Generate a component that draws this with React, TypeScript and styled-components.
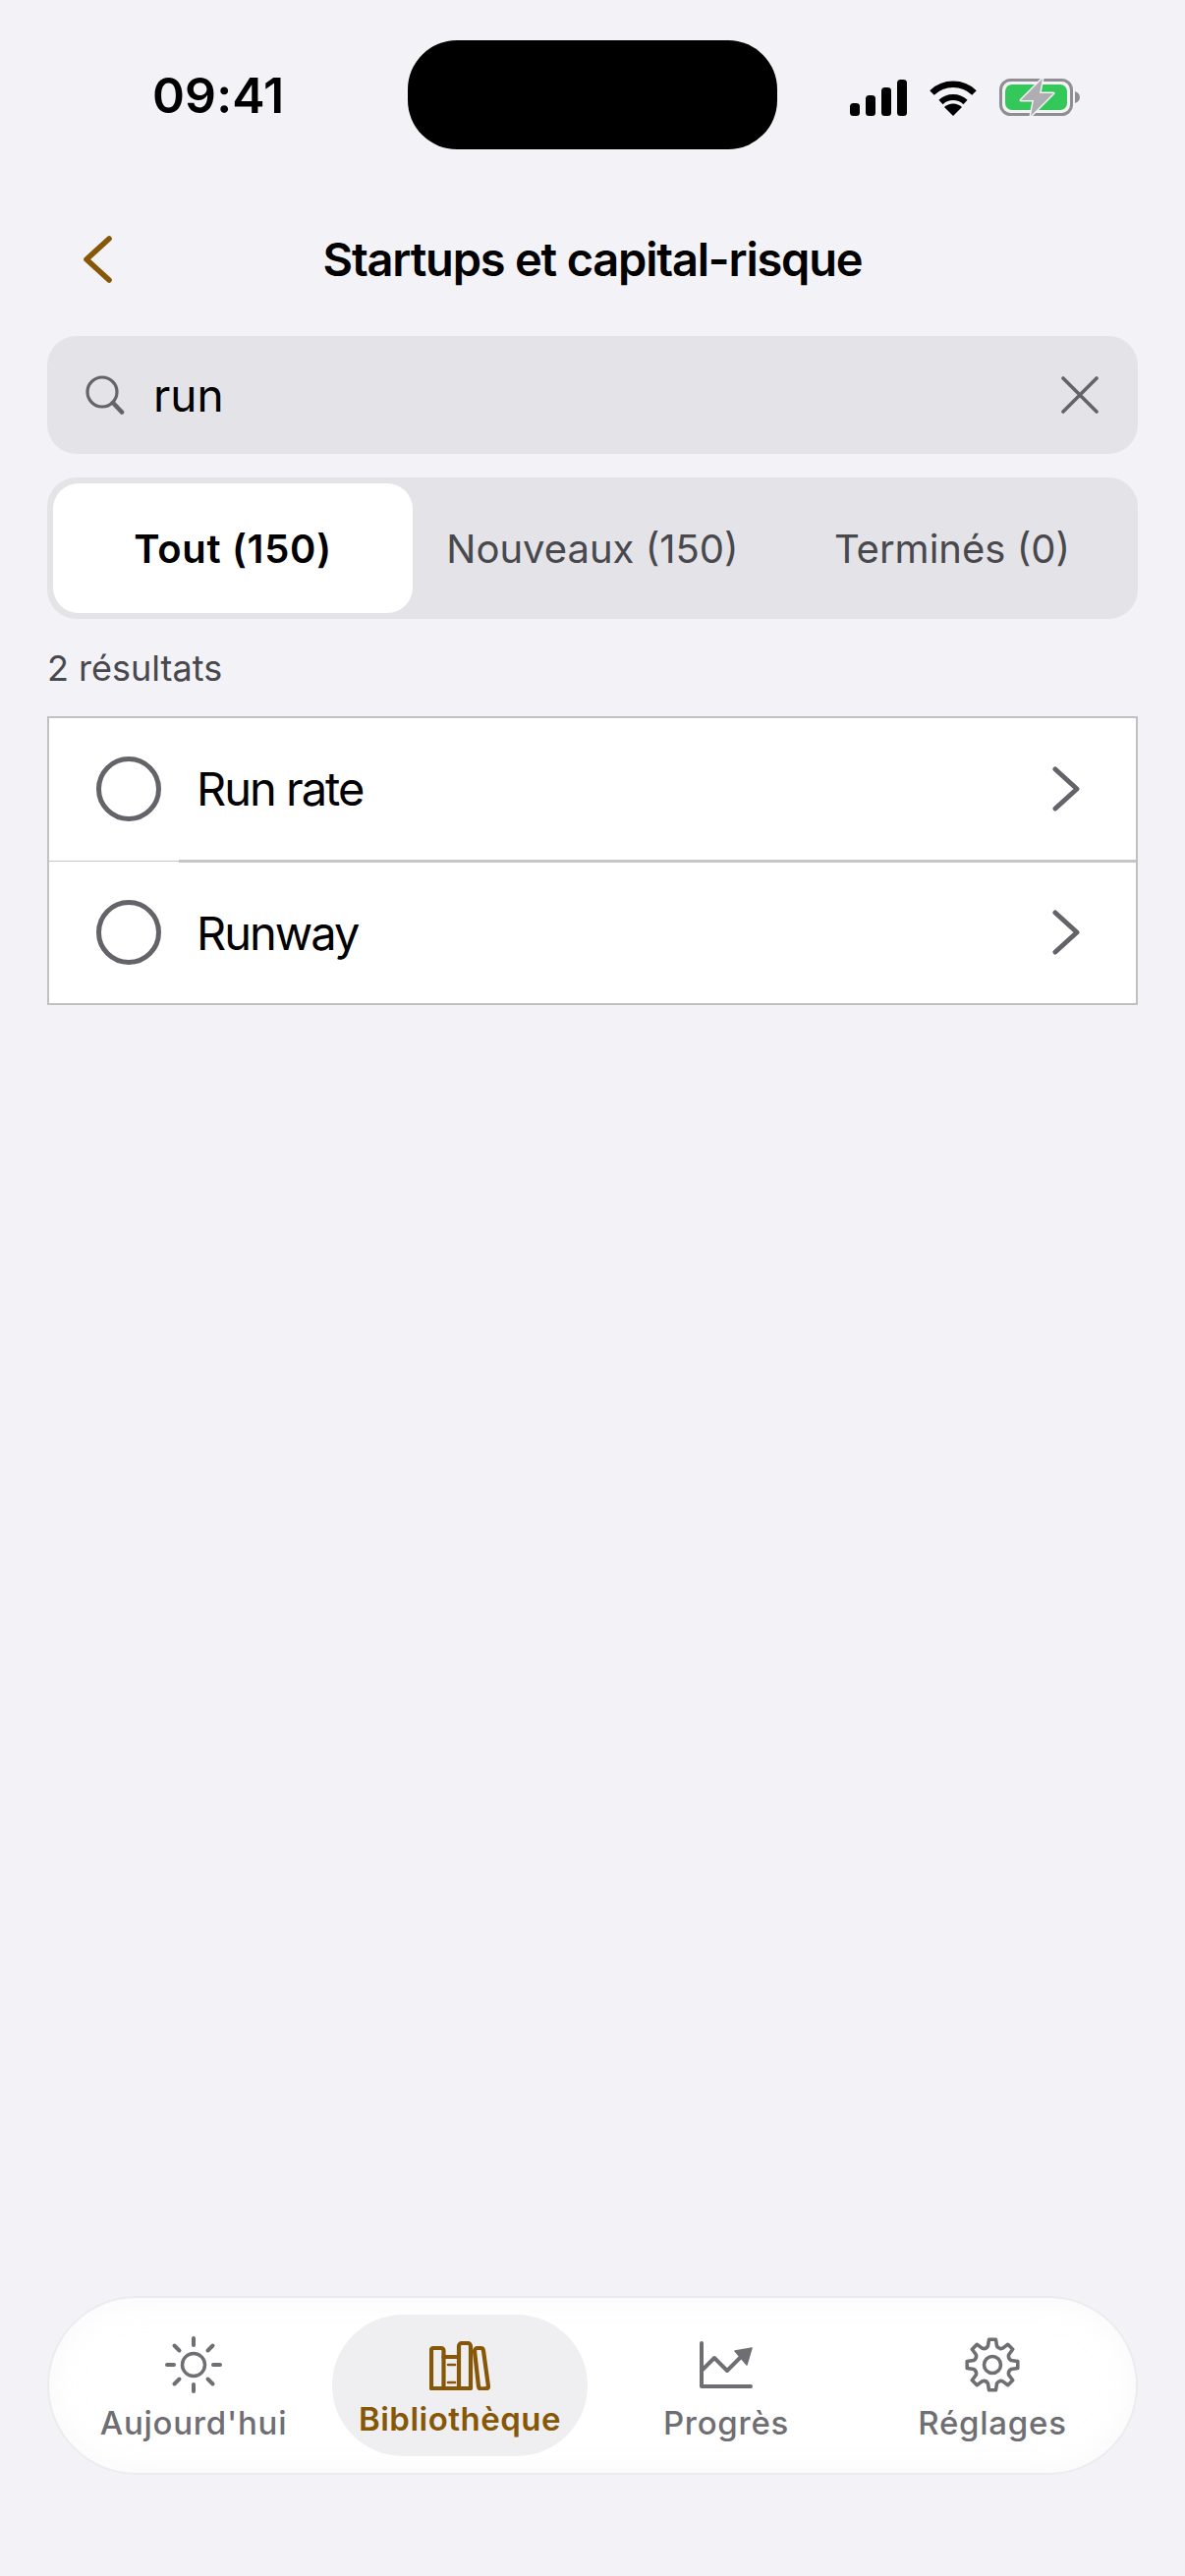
import React from 'react';
import styled, { createGlobalStyle } from 'styled-components';

const GlobalStyle = createGlobalStyle`
  html, body {
    margin: 0;
    padding: 0;
    background: #f2f2f7;
  }
  * {
    box-sizing: border-box;
  }
`;

const Page = styled.div`
  width: 1206px;
  height: 2622px;
  background: #f2f2f7;
  display: flex;
  flex-direction: column;
  font-family: Inter, "Liberation Sans", sans-serif;
  color: #000;
  overflow: hidden;
`;

const StatusBar = styled.div`
  display: grid;
  grid-template-columns: 415px 376px 1fr;
  align-items: center;
  padding-top: 41px;
  height: 152px;
`;

const Time = styled.div`
  padding-left: 155px;
  font-size: 50px;
  font-weight: 600;
  line-height: 56px;
  letter-spacing: 0.1px;
  margin-top: 1px;
`;

const Island = styled.div`
  height: 111px;
  background: #000;
  border-radius: 50px;
`;

const StatusIcons = styled.div`
  display: flex;
  align-items: center;
  padding-left: 74px;
  gap: 22px;
  margin-top: 5px;
`;

const Header = styled.div`
  display: grid;
  grid-template-columns: 1fr auto 1fr;
  align-items: center;
  height: 100px;
  margin-top: 62px;
  padding: 0 48px;
`;

const BackButton = styled.div`
  display: flex;
  color: #865706;
  padding-left: 36px;
`;

const Title = styled.h1`
  margin: 0;
  font-size: 47px;
  font-weight: 600;
  letter-spacing: -1.2px;
  line-height: 60px;
`;

const Content = styled.main`
  flex: 1;
  display: flex;
  flex-direction: column;
  padding: 28px 48px 0;
`;

const SearchBar = styled.div`
  height: 120px;
  border-radius: 30px;
  background: #e3e3e8;
  display: flex;
  align-items: center;
  padding: 0 40px 0 39px;
  color: #636369;
`;

const SearchText = styled.div`
  flex: 1;
  margin-left: 29px;
  font-size: 46px;
  color: #000;
`;

const Tabs = styled.div`
  margin-top: 24px;
  height: 144px;
  padding: 6px;
  border-radius: 30px;
  background: #e3e3e8;
  display: grid;
  grid-template-columns: repeat(3, 1fr);
`;

const Tab = styled.div<{ $active?: boolean }>`
  display: flex;
  align-items: center;
  justify-content: center;
  border-radius: 26px;
  font-size: 40px;
  letter-spacing: ${(p) => (p.$active ? '0.7px' : '0')};
  font-weight: ${(p) => (p.$active ? 600 : 400)};
  color: ${(p) => (p.$active ? '#000' : '#48484d')};
  background: ${(p) => (p.$active ? '#fff' : 'transparent')};
`;

const ResultCount = styled.div`
  margin-top: 28px;
  font-size: 36px;
  line-height: 44px;
  color: #48484d;
`;

const List = styled.div`
  margin-top: 27px;
  border: 2px solid #c1c1c4;
  background: #fff;
`;

const Row = styled.div`
  height: 143.5px;
  display: flex;
  align-items: center;
  padding: 0 57px 0 48px;
  color: #636369;
`;

const Divider = styled.div`
  height: 3px;
  background:
    linear-gradient(to right, transparent 132px, #c6c6c8 132px),
    linear-gradient(to bottom, #fff 1px, #c6c6c8 1px, #c6c6c8 2px, #fff 2px);
`;

const Radio = styled.div`
  width: 66px;
  height: 66px;
  border-radius: 50%;
  border: 5px solid #636369;
`;

const RowLabel = styled.div`
  flex: 1;
  margin-left: 36px;
  font-size: 47px;
  letter-spacing: -2px;
  color: #000;
`;

const NavBar = styled.nav`
  margin: 0 48px 103px;
  height: 182px;
  border-radius: 91px;
  background: #fff;
  border: 2px solid #ececef;
  box-shadow: inset 0 0 30px rgba(242, 242, 247, 0.5);
  display: grid;
  grid-template-columns: 282px 260px 282px 260px;
  align-items: center;
  padding-left: 6px;
`;

const NavItem = styled.div<{ $active?: boolean }>`
  height: 144px;
  border-radius: 72px;
  display: flex;
  flex-direction: column;
  align-items: center;
  color: ${(p) => (p.$active ? '#865706' : '#6e6e73')};
  background: ${(p) => (p.$active ? '#efeff1' : 'transparent')};
  padding-top: ${(p) => (p.$active ? '24px' : '23px')};
`;

const NavIcon = styled.div`
  height: 56px;
  display: flex;
  align-items: center;
  justify-content: center;
`;

const NavLabel = styled.div<{ $active?: boolean }>`
  margin-top: ${(p) => (p.$active ? '6px' : '11px')};
  font-size: 33px;
  line-height: 40px;
  font-weight: ${(p) => (p.$active ? 600 : 500)};
  letter-spacing: ${(p) => (p.$active ? '0.5px' : '0.75px')};
`;

const SignalIcon = () => (
  <svg width="58" height="37" viewBox="0 0 58 37" fill="#000">
    <rect x="0" y="24" width="10" height="13" rx="3.5" />
    <rect x="16" y="16" width="10" height="21" rx="3.5" />
    <rect x="32" y="8" width="10" height="29" rx="3.5" />
    <rect x="48" y="0" width="10" height="37" rx="3.5" />
  </svg>
);

const WifiIcon = () => (
  <svg width="50" height="37" viewBox="0 0 50 37" fill="none" stroke="#000">
    <path d="M3.5 13.5 A 31 31 0 0 1 46.5 13.5" strokeWidth="6.5" />
    <path d="M12.5 23 A 18 18 0 0 1 37.5 23" strokeWidth="6" />
    <path d="M25 37 L16 28 A 13 13 0 0 1 34 28 Z" fill="#000" stroke="none" />
  </svg>
);

const BatteryIcon = () => (
  <svg width="82" height="40" viewBox="0 0 82 40">
    <rect x="1.5" y="2.5" width="72" height="35" rx="10" fill="none" stroke="#8e8e93" strokeWidth="3" />
    <rect x="6" y="7" width="63" height="26" rx="7" fill="#34c759" />
    <path d="M77 14 C80 15 82 17 82 20 C82 23 80 25 77 26 Z" fill="#8e8e93" />
    <path
      d="M44 1 L22 23 H35 L32 39 L55 16 H41 Z"
      fill="#aeaeb2"
      stroke="#f2f2f7"
      strokeWidth="3"
      strokeLinejoin="round"
      paintOrder="stroke"
    />
  </svg>
);

const BackIcon = () => (
  <svg width="30" height="48" viewBox="0 0 30 48" fill="none" stroke="currentColor" strokeWidth="5.6" strokeLinecap="round" strokeLinejoin="round">
    <path d="M27 3 L4 24 L27 45" />
  </svg>
);

const SearchIcon = () => (
  <svg width="40" height="40" viewBox="0 0 40 40" fill="none" stroke="currentColor" strokeLinecap="round">
    <circle cx="17" cy="17" r="15" strokeWidth="3.2" />
    <path d="M28 28 L37 37.5" strokeWidth="4.6" />
  </svg>
);

const ClearIcon = () => (
  <svg width="38" height="38" viewBox="0 0 38 38" fill="none" stroke="currentColor" strokeWidth="3.6" strokeLinecap="round">
    <path d="M2 2 L36 36 M36 2 L2 36" />
  </svg>
);

const RowChevron = () => (
  <svg width="28" height="46" viewBox="0 0 28 46" fill="none" stroke="currentColor" strokeWidth="5" strokeLinecap="round" strokeLinejoin="round">
    <path d="M3 3 L25 23 L3 43" />
  </svg>
);

const SunIcon = () => (
  <svg width="58" height="58" viewBox="0 0 58 58" fill="none" stroke="currentColor" strokeWidth="4" strokeLinecap="round">
    <circle cx="29" cy="29" r="11.5" strokeWidth="3.5" />
    <path d="M29 2v7M29 49v7M2 29h7M49 29h7M9.5 9.5l5 5M43.5 43.5l5 5M9.5 48.5l5-5M43.5 14.5l5-5" />
  </svg>
);

const BooksIcon = () => (
  <svg width="62" height="50" viewBox="0 0 62 50" fill="none" stroke="currentColor" strokeWidth="4.2" strokeLinejoin="round" strokeLinecap="round">
    <path d="M4 7h8a2.5 2.5 0 0 1 2.5 2.5V48H2V9a2 2 0 0 1 2-2z" />
    <path d="M14.5 16H30M14.5 48H30" />
    <path d="M19 24h7M19 42h7" strokeWidth="2.6" />
    <path d="M33 2h6a3 3 0 0 1 3 3v43H30V5a3 3 0 0 1 3-3z" />
    <path d="M46 10a3 3 0 0 1 3-3h3a3 3 0 0 1 3 2.6l5 36.4a2 2 0 0 1-2 2.2l-5 .3a3 3 0 0 1-3-2.6z" />
  </svg>
);

const ProgressIcon = () => (
  <svg width="54" height="48" viewBox="0 0 54 48" fill="none" stroke="currentColor" strokeWidth="4" strokeLinecap="round" strokeLinejoin="round">
    <path d="M2 2v44h50" />
    <path d="M3 29 L15 17 L28 30 L43 15" />
    <path d="M53 7 L36 10 L48 24 Z" fill="currentColor" strokeWidth="1.5" />
  </svg>
);

// 8 toothed gear, outline built from polar points
const gearPath = (() => {
  const cx = 29;
  const cy = 29;
  const outer = 26;
  const inner = 19.5;
  const teeth = 8;
  const step = (Math.PI * 2) / teeth;
  const pt = (r: number, a: number) =>
    `${(cx + r * Math.sin(a)).toFixed(2)} ${(cy - r * Math.cos(a)).toFixed(2)}`;
  let d = '';
  for (let i = 0; i < teeth; i++) {
    const a = i * step;
    d += `${i === 0 ? 'M' : 'L'}${pt(inner, a - step * 0.3)} `;
    d += `L${pt(outer, a - step * 0.17)} L${pt(outer, a + step * 0.17)} L${pt(inner, a + step * 0.3)} `;
    d += `Q${pt(inner - 2.5, a + step * 0.5)} `;
    d += `${pt(inner, a + step * 0.7)} `;
  }
  return `${d}Z`;
})();

const GearIcon = () => (
  <svg width="58" height="58" viewBox="0 0 58 58" fill="none" stroke="currentColor" strokeWidth="3.6" strokeLinejoin="round">
    <path d={gearPath} />
    <circle cx="29" cy="29" r="8.5" />
  </svg>
);

const App = () => {
  return (
    <Page>
      <GlobalStyle />
      <StatusBar>
        <Time>09:41</Time>
        <Island />
        <StatusIcons>
          <SignalIcon />
          <WifiIcon />
          <BatteryIcon />
        </StatusIcons>
      </StatusBar>
      <Header>
        <BackButton>
          <BackIcon />
        </BackButton>
        <Title>Startups et capital-risque</Title>
      </Header>
      <Content>
        <SearchBar>
          <SearchIcon />
          <SearchText>run</SearchText>
          <ClearIcon />
        </SearchBar>
        <Tabs>
          <Tab $active>Tout (150)</Tab>
          <Tab>Nouveaux (150)</Tab>
          <Tab>Terminés (0)</Tab>
        </Tabs>
        <ResultCount>2 résultats</ResultCount>
        <List>
          <Row>
            <Radio />
            <RowLabel>Run rate</RowLabel>
            <RowChevron />
          </Row>
          <Divider />
          <Row>
            <Radio />
            <RowLabel>Runway</RowLabel>
            <RowChevron />
          </Row>
        </List>
      </Content>
      <NavBar>
        <NavItem>
          <NavIcon><SunIcon /></NavIcon>
          <NavLabel>Aujourd'hui</NavLabel>
        </NavItem>
        <NavItem $active>
          <NavIcon><BooksIcon /></NavIcon>
          <NavLabel $active>Bibliothèque</NavLabel>
        </NavItem>
        <NavItem>
          <NavIcon><ProgressIcon /></NavIcon>
          <NavLabel>Progrès</NavLabel>
        </NavItem>
        <NavItem>
          <NavIcon><GearIcon /></NavIcon>
          <NavLabel>Réglages</NavLabel>
        </NavItem>
      </NavBar>
    </Page>
  );
};

export default App;
